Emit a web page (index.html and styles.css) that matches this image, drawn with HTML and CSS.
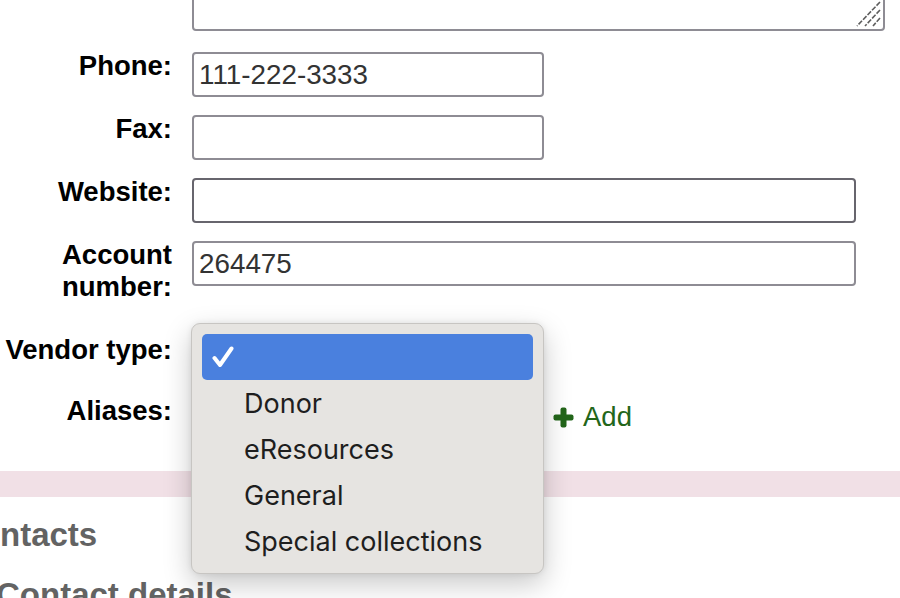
FILE: index.html
```html
<!DOCTYPE html>
<html lang="en">
<head>
<meta charset="utf-8">
<title>Vendor details</title>
<link rel="stylesheet" href="styles.css">
</head>
<body>
<div class="page">
  <div class="form">
    <div class="label"></div>
    <div class="field">
      <div class="ta-wrap">
        <textarea class="ta"></textarea>
        <svg class="grip" width="26" height="26" viewBox="0 0 26 26" aria-hidden="true">
          <line x1="25" y1="1" x2="2" y2="25"/>
          <line x1="25" y1="9" x2="10" y2="25"/>
          <line x1="25" y1="17" x2="18" y2="25"/>
        </svg>
      </div>
    </div>

    <label class="label">Phone:</label>
    <div class="field"><input class="input short" type="text" value="111-222-3333"></div>

    <label class="label">Fax:</label>
    <div class="field"><input class="input short" type="text" value=""></div>

    <label class="label">Website:</label>
    <div class="field"><input class="input long hover" type="text" value=""></div>

    <label class="label">Account number:</label>
    <div class="field"><input class="input long" type="text" value="264475"></div>

    <label class="label vendor-label">Vendor type:</label>
    <div class="field vendor-field">
      <div class="fake-select"></div>
      <div class="popup">
        <div class="opt selected">
          <svg class="check" width="22" height="22" viewBox="0 0 22 22" aria-hidden="true">
            <path d="M2.5 12 L8 19 L19.5 2.5"/>
          </svg>
        </div>
        <div class="opt">Donor</div>
        <div class="opt">eResources</div>
        <div class="opt">General</div>
        <div class="opt">Special collections</div>
      </div>
    </div>

    <label class="label">Aliases:</label>
    <div class="field alias-field">
      <input class="input short" type="text" value="">
      <a class="add" href="#">
        <svg class="plus" width="21" height="21" viewBox="0 0 21 21" aria-hidden="true">
          <rect x="7.5" y="0.5" width="6" height="20" rx="2"/>
          <rect x="0.5" y="7.5" width="20" height="6" rx="2"/>
        </svg>
        <span>Add</span>
      </a>
    </div>
  </div>

  <div class="band"></div>

  <h2 class="h-contacts">Contacts</h2>
  <h3 class="h-details">Contact details</h3>
</div>
</body>
</html>
```

FILE: styles.css
```css
html, body {
  margin: 0;
  padding: 0;
  overflow: hidden;
  background: #ffffff;
}

body {
  font-family: "Liberation Sans", Arial, Helvetica, sans-serif;
  color: #000;
}

.page {
  width: 900px;
}

.form {
  display: grid;
  grid-template-columns: 172px 1fr;
  column-gap: 20px;
  row-gap: 18px;
  margin-top: -39px;
}

.label {
  font-weight: bold;
  font-size: 27.5px;
  line-height: 32px;
  text-align: right;
  color: #000;
  margin: -2px 0 2px;
}

.field {
  min-width: 0;
}

.ta-wrap {
  position: relative;
  width: 693px;
  height: 70px;
  margin-bottom: 3px;
}

.ta {
  display: block;
  box-sizing: border-box;
  width: 693px;
  height: 70px;
  margin: 0;
  border: 2px solid #8e8c94;
  border-radius: 4px;
  resize: none;
  font-family: "Liberation Sans", Arial, sans-serif;
  font-size: 27px;
  background: #fff;
}

.grip {
  position: absolute;
  right: 4px;
  bottom: 4px;
}

.grip line {
  stroke: #5e5e5e;
  stroke-width: 1.6;
  stroke-dasharray: 5 1.5;
}

.input {
  display: block;
  box-sizing: border-box;
  height: 45px;
  margin: 0;
  padding: 0 5px;
  border: 2px solid #8e8c94;
  border-radius: 4px;
  font-family: "Liberation Sans", Arial, sans-serif;
  font-size: 27.8px;
  color: #333;
  background: #fff;
  outline: none;
}

.input.short {
  width: 352px;
}

.input.long {
  width: 664px;
}

.input.hover {
  border-color: #67656d;
}

.vendor-label {
  padding-top: 13px;
}

.vendor-field {
  position: relative;
}

.fake-select {
  box-sizing: border-box;
  width: 352px;
  height: 45px;
  margin-top: 11px;
  border: 2px solid #8e8c94;
  border-radius: 4px;
}

.popup {
  position: absolute;
  top: 0;
  left: -1px;
  z-index: 10;
  box-sizing: border-box;
  width: 353px;
  height: 251px;
  padding: 10px;
  background: #e6e4e1;
  border: 1px solid #c7c5c2;
  border-radius: 9px;
  box-shadow: 0 10px 28px rgba(0, 0, 0, 0.22), 0 0 6px rgba(0, 0, 0, 0.08);
  font-family: Inter, "Noto Sans", sans-serif;
  font-size: 27px;
  color: #1e1e1e;
}

.opt {
  display: flex;
  align-items: center;
  height: 46px;
  padding-left: 42px;
  white-space: nowrap;
}

.opt.selected {
  background: #4a80de;
  border-radius: 5px;
  padding-left: 10px;
}

.check path {
  fill: none;
  stroke: #fff;
  stroke-width: 4;
  stroke-linecap: round;
  stroke-linejoin: round;
}

.alias-field {
  display: flex;
  align-items: center;
  gap: 9px;
}

.add {
  display: flex;
  align-items: center;
  gap: 9px;
  color: #23661a;
  text-decoration: none;
  font-size: 27.5px;
  padding-bottom: 5px;
}

.plus rect {
  fill: #23661a;
}

.band {
  height: 26px;
  margin-top: 29px;
  background: #f1e0e6;
}

.h-contacts,
.h-details {
  font-size: 33px;
  line-height: 40px;
  font-weight: bold;
  color: #636363;
  margin: 0;
  white-space: nowrap;
}

.h-contacts {
  margin-top: 18px;
  margin-left: -44px;
}

.h-details {
  margin-top: 20px;
  margin-left: -4px;
}
```
